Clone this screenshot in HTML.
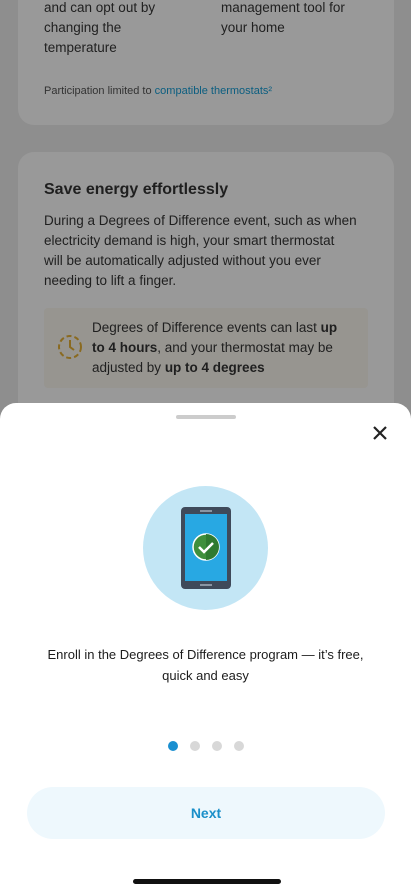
<!DOCTYPE html>
<html><head><meta charset="utf-8"><style>
*{margin:0;padding:0;box-sizing:border-box}
body{width:411px;height:891px;overflow:hidden;background:#8e8e8e;font-family:"Liberation Sans","DejaVu Sans",sans-serif;position:relative;color:#1c1c1c}
.card{position:absolute;left:18px;width:376px;background:#999;border-radius:16px}
.t{position:absolute;font-size:13.5px;line-height:20px;color:#1f1f1f}
.sheet{position:absolute;left:0;top:403px;width:411px;height:488px;background:#fff;border-radius:16px 16px 0 0}
</style></head><body>
<div class="card" style="top:-20px;height:145px"></div>
<div class="t" style="left:44px;top-:0;top:-2px">and can opt out by<br>changing the<br>temperature</div>
<div class="t" style="left:221px;top:-2px">management tool for<br>your home</div>
<div class="t" style="left:44px;top:81px;font-size:11px;color:#333">Participation limited to <span style="color:#0b5e80">compatible thermostats²</span></div>
<div class="card" style="top:152px;height:280px"></div>
<div class="t" style="left:44px;top:180px;font-size:16px;font-weight:bold">Save energy effortlessly</div>
<div class="t" style="left:44px;top:211px;font-size:13.5px">During a Degrees of Difference event, such as when<br>electricity demand is high, your smart thermostat<br>will be automatically adjusted without you ever<br>needing to lift a finger.</div>
<div style="position:absolute;left:44px;top:308px;width:324px;height:80px;background:#979590;border-radius:4px"></div>
<svg style="position:absolute;left:56px;top:333px" width="28" height="28" viewBox="0 0 28 28"><circle cx="14" cy="14" r="11" fill="none" stroke="#8a6a20" stroke-width="2" stroke-dasharray="5 3"/><path d="M14 7v7l4 3" stroke="#8a6a20" stroke-width="2" fill="none"/></svg>
<div class="t" style="left:92px;top:318px">Degrees of Difference events can last <b>up</b><br><b>to 4 hours</b>, and your thermostat may be<br>adjusted by <b>up to 4 degrees</b></div>
<div class="sheet"></div>
<div style="position:absolute;left:176px;top:415px;width:60px;height:4px;border-radius:2px;background:#ccc"></div>
<svg style="position:absolute;left:372px;top:425px" width="16" height="16" viewBox="0 0 16 16"><path d="M2 2L14 14M14 2L2 14" stroke="#222" stroke-width="2.2"/></svg>
<div style="position:absolute;left:143px;top:486px;width:125px;height:124px;border-radius:50%;background:#c3e6f5"></div>
<svg style="position:absolute;left:181px;top:507px" width="50" height="82" viewBox="0 0 50 82"><rect x="0" y="0" width="50" height="82" rx="4" fill="#3f4a5a"/><rect x="4" y="7" width="42" height="67" fill="#28a8e3"/><rect x="19" y="3" width="12" height="2" fill="#8a95a3"/><rect x="19" y="77" width="12" height="2" fill="#8a95a3"/><circle cx="25" cy="40" r="13" fill="#3f8f3c" stroke="#fff" stroke-width="1.5"/><path d="M25 27a13 13 0 0 1 0 26z" fill="#2f7a30"/><path d="M18 40l5 5 9-9" stroke="#fff" stroke-width="2.5" fill="none"/></svg>
<div style="position:absolute;left:0;width:411px;top:644px;text-align:center;font-size:13px;line-height:21px;color:#1c1c1c">Enroll in the Degrees of Difference program — it’s free,<br>quick and easy</div>
<div style="position:absolute;left:168px;top:741px;width:10px;height:10px;border-radius:50%;background:#1a8fd0"></div>
<div style="position:absolute;left:190px;top:741px;width:10px;height:10px;border-radius:50%;background:#d8d8d8"></div>
<div style="position:absolute;left:212px;top:741px;width:10px;height:10px;border-radius:50%;background:#d8d8d8"></div>
<div style="position:absolute;left:234px;top:741px;width:10px;height:10px;border-radius:50%;background:#d8d8d8"></div>
<div style="position:absolute;left:27px;top:787px;width:358px;height:52px;border-radius:26px;background:#eef8fd;color:#1a8fc9;font-weight:bold;font-size:14px;text-align:center;line-height:52px">Next</div>
<div style="position:absolute;left:133px;top:879px;width:148px;height:5px;border-radius:3px;background:#111"></div>
</body></html>
